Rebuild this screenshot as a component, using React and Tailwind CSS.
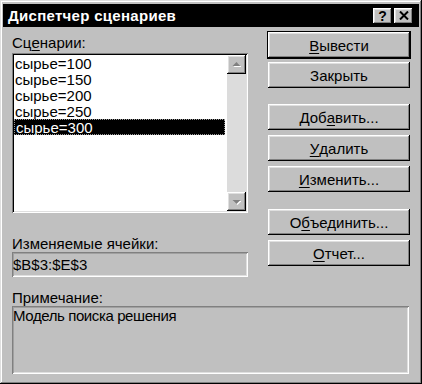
import React from "react";

const raised =
  "shadow-[inset_-1px_-1px_#000,inset_1px_1px_#fff,inset_-2px_-2px_#808080,inset_2px_2px_#dfdfdf]";
const sunken =
  "shadow-[inset_1px_1px_#808080,inset_-1px_-1px_#fff,inset_2px_2px_#000,inset_-2px_-2px_#dfdfdf]";
const field =
  "shadow-[inset_1px_1px_#808080,inset_-1px_-1px_#fff,inset_2px_2px_#a0a0a0,inset_-2px_-2px_#dfdfdf]";

function Btn({ label, under, top, isDefault }) {
  // under = index of the mnemonic letter
  const text =
    under === undefined ? (
      label
    ) : (
      <>
        {label.slice(0, under)}
        <span className="underline underline-offset-2">{label[under]}</span>
        {label.slice(under + 1)}
      </>
    );
  return (
    <div
      className={`w-[142px] h-[26px] flex items-center justify-center bg-[#c0c0c0] ${raised} ${
        isDefault ? "outline outline-1 outline-black" : ""
      }`}
      style={{ marginTop: top }}
    >
      {text}
    </div>
  );
}

function Arrow({ up }) {
  return (
    <div className={`w-[19px] h-[19px] bg-[#c0c0c0] flex items-center justify-center ${raised}`}>
      <svg width="9" height="6" viewBox="0 0 9 6">
        {up ? (
          <>
            <polygon points="5.5,1 1.5,5 9.5,5" fill="#fff" />
            <polygon points="4.5,0 0.5,4 8.5,4" fill="#808080" />
          </>
        ) : (
          <>
            <polygon points="1.5,2 9.5,2 5.5,6" fill="#fff" />
            <polygon points="0.5,1 8.5,1 4.5,5" fill="#808080" />
          </>
        )}
      </svg>
    </div>
  );
}

export default function App() {
  const items = ["сырье=100", "сырье=150", "сырье=200", "сырье=250", "сырье=300"];

  return (
    <div
      className="w-[422px] h-[384px] bg-[#c0c0c0] p-[3px] flex flex-col text-black text-[15px] leading-none shadow-[inset_-1px_-1px_#000,inset_1px_1px_#dfdfdf,inset_-2px_-2px_#808080,inset_2px_2px_#fff]"
      style={{ fontFamily: '"Liberation Sans", Arial, sans-serif' }}
    >
      {/* title bar */}
      <div className="h-[23px] mt-[1px] bg-black flex items-center pl-[5px] pr-[6px]">
        <span className="text-white font-bold text-[15px] tracking-[0.3px]">Диспетчер сценариев</span>
        <div className="ml-auto flex gap-[2px]">
          <div className={`w-[19px] h-[16px] bg-[#c0c0c0] flex items-center justify-center font-bold text-[14px] ${raised}`}>
            ?
          </div>
          <div className={`w-[19px] h-[16px] bg-[#c0c0c0] flex items-center justify-center ${raised}`}>
            <svg width="10" height="9" viewBox="0 0 10 9">
              <path d="M1 0.5 L9 8.5 M9 0.5 L1 8.5" stroke="#000" strokeWidth="2" />
            </svg>
          </div>
        </div>
      </div>

      {/* body */}
      <div className="flex-1 px-[9px] flex flex-col">
        <div className="flex">
          {/* left column */}
          <div className="w-[236px] flex flex-col">
            <div className="h-[16px] mt-[7px] flex items-center">
              Сц<span className="underline underline-offset-2">е</span>нарии:
            </div>
            <div className={`mt-[3px] h-[160px] bg-white p-[2px] flex ${sunken}`}>
              <div className="flex-1 flex flex-col">
                {items.map((it, i) => (
                  <div
                    key={it}
                    className={`h-[16px] pl-[1px] flex items-center ${
                      i === 4 ? "bg-black text-white border border-dotted border-[#9a9a9a] mr-[2px]" : ""
                    }`}
                  >
                    {it}
                  </div>
                ))}
              </div>
              <div className="w-[19px] flex flex-col bg-[#dcdcdc]">
                <Arrow up />
                <div className="flex-1" />
                <Arrow />
              </div>
            </div>
            <div className="h-[16px] mt-[22px] flex items-center">Изменяемые ячейки:</div>
            <div className={`mt-[1px] h-[25px] bg-[#c0c0c0] flex items-center pl-[1px] ${field}`}>
              $B$3:$E$3
            </div>
          </div>

          {/* right column */}
          <div className="ml-[20px] flex flex-col">
            <Btn label="Вывести" under={0} top={5} isDefault />
            <Btn label="Закрыть" top={4} />
            <Btn label="Добавить..." under={3} top={16} />
            <Btn label="Удалить" under={0} top={5} />
            <Btn label="Изменить..." under={0} top={5} />
            <Btn label="Объединить..." under={1} top={17} />
            <Btn label="Отчет..." under={0} top={5} />
          </div>
        </div>

        <div className="h-[16px] mt-[12px] flex items-center">Примечание:</div>
        <div className={`mt-[1px] mr-[1px] h-[68px] bg-[#c0c0c0] px-[1px] pt-[2px] tracking-[-0.4px] ${field}`}>
          Модель поиска решения
        </div>
      </div>
    </div>
  );
}
